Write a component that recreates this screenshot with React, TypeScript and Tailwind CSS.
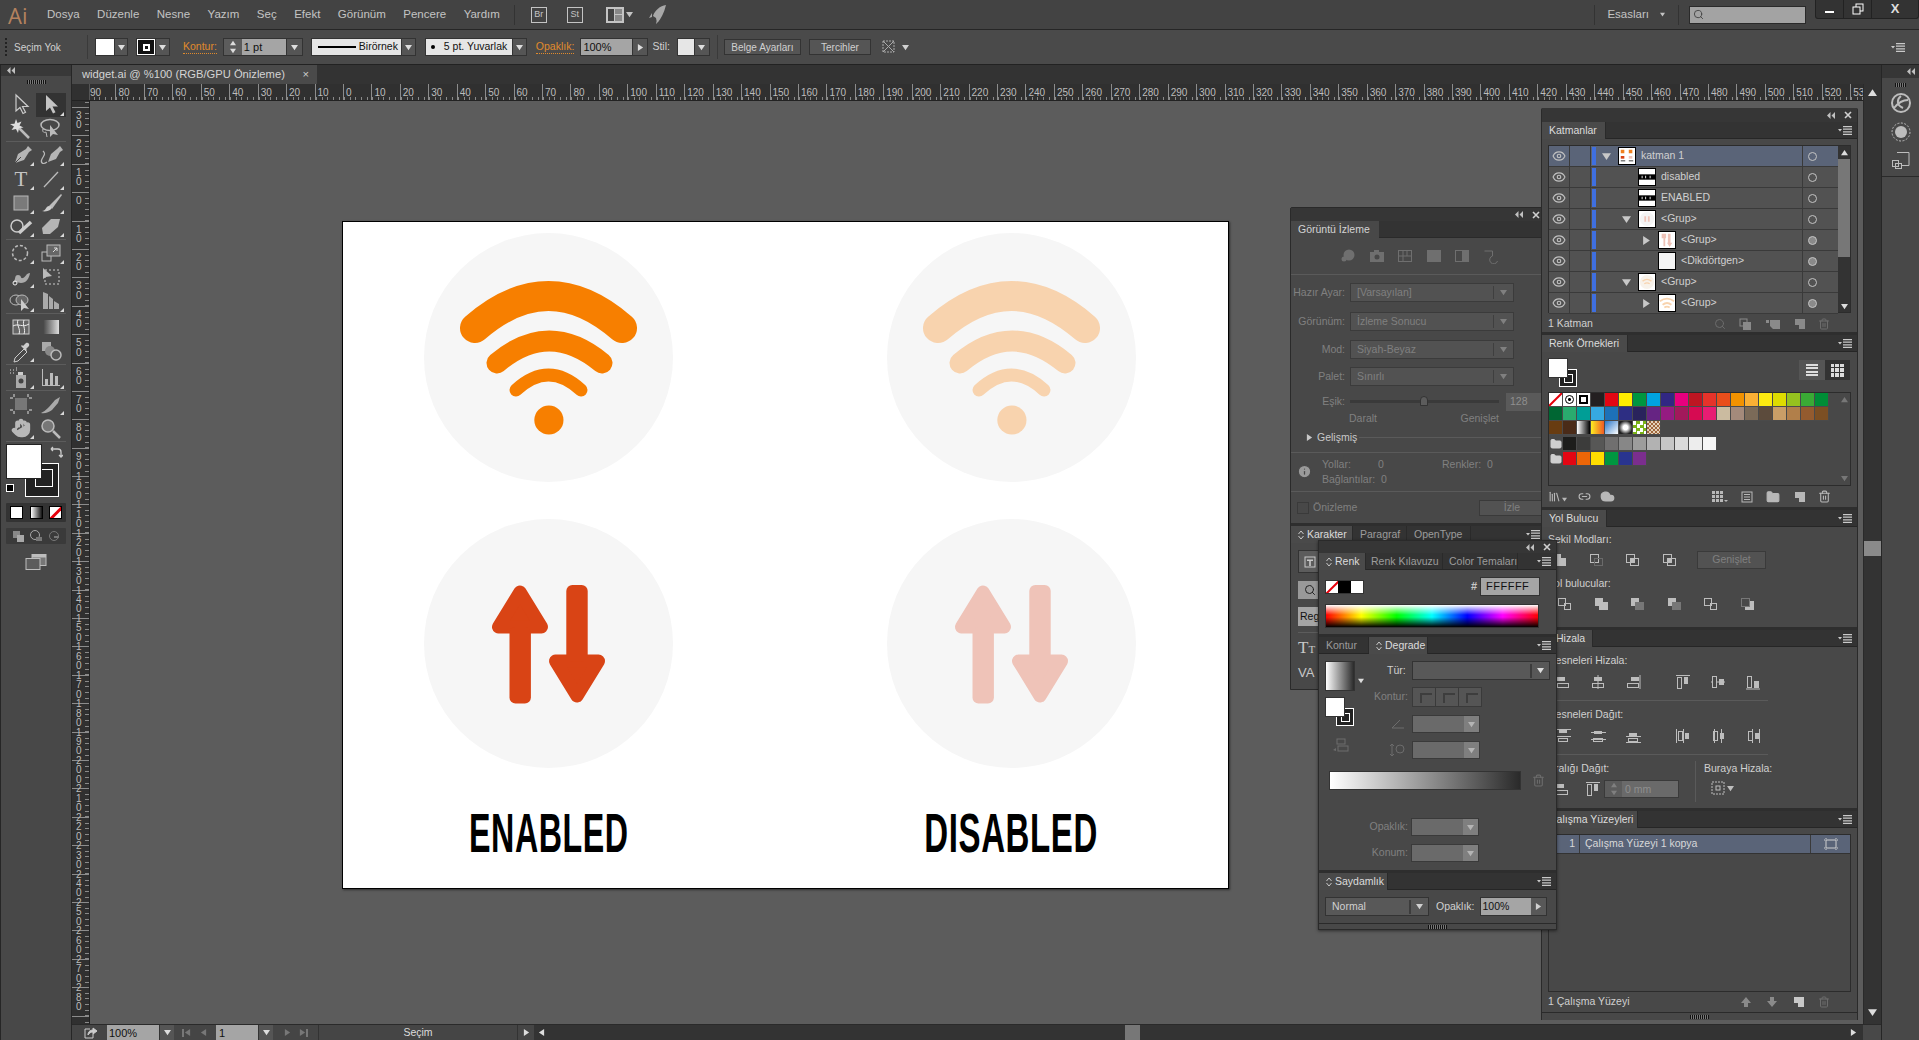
import type { ReactNode } from "react"
import { Eye, Hand, Search, Info, Trash2, Folder, Cloud, Link2, Library } from "lucide-react"

type Kids = { children?: ReactNode; className?: string }

const Tri = ({ dir = "down", size = 7, className = "" }: { dir?: "down" | "up" | "left" | "right"; size?: number; className?: string }) => {
  const d = { down: "M0 1h8L4 7z", up: "M0 7h8L4 1z", left: "M7 0v8L1 4z", right: "M1 0v8l6-4z" }[dir]
  return (
    <svg width={size} height={size} viewBox="0 0 8 8" className={`shrink-0 fill-current ${className}`}>
      <path d={d} />
    </svg>
  )
}

const Sv = ({ w = 16, h = 16, children, className = "" }: Kids & { w?: number; h?: number }) => (
  <svg width={w} height={h} viewBox={`0 0 ${w} ${h}`} className={`shrink-0 ${className}`} fill="currentColor">
    {children}
  </svg>
)

const PanelMenu = () => (
  <svg width="14" height="9" viewBox="0 0 14 9" className="shrink-0 fill-[#c9c9c9]">
    <path d="M0 3h4L2 5.500zM5 0h9v1.200H5zM5 2.600h9v1.200H5zM5 5.200h9v1.200H5zM5 7.800h9V9H5z" />
  </svg>
)

const Updown = () => (
  <svg width="6" height="10" viewBox="0 0 6 10" className="mr-[3px] shrink-0 fill-none stroke-[#c9c9c9]">
    <path d="M.5 4 3 1l2.500 3M.5 6 3 9l2.500-3" />
  </svg>
)

type Tab = { label: string; w: number; on?: boolean; ud?: boolean; pl?: number }

function TabRow({ tabs }: { tabs: Tab[] }) {
  return (
    <div className="flex h-[17px] shrink-0 items-stretch border-b border-[#262626] bg-[#333333]">
      {tabs.map((t) => (
        <div
          key={t.label}
          style={{ width: t.w, paddingLeft: t.pl ?? 7 }}
          className={`flex items-center whitespace-nowrap border-r border-[#2a2a2a] text-[10.500px] leading-none ${
            t.on ? "-mb-px bg-[#4a4a4a] text-[#dcdcdc]" : "text-[#9c9c9c]"
          }`}
        >
          {t.ud && <Updown />}
          {t.label}
        </div>
      ))}
      <div className="ml-auto flex items-center pr-[5px]">
        <PanelMenu />
      </div>
    </div>
  )
}

const Close = () => (
  <svg width="8" height="8" viewBox="0 0 8 8" className="stroke-[#d0d0d0] stroke-[1.6]">
    <path d="M1 1l6 6M7 1 1 7" />
  </svg>
)

const Collapse = () => (
  <svg width="8" height="7" viewBox="0 0 8 7" className="fill-[#c0c0c0]">
    <path d="M3.500 0v7L0 3.500zM8 0v7L4.500 3.500z" />
  </svg>
)

const TitleBar = ({ className = "h-[14px]" }: { className?: string }) => (
  <div className={`flex shrink-0 items-center justify-end gap-[9px] bg-[#363636] pr-[5px] ${className}`}>
    <Collapse />
    <Close />
  </div>
)

// dolgu + kontur kutusu
function FillStroke({ big = false }: { big?: boolean }) {
  if (big) {
    return (
      <div className="relative h-[53px] w-[53px]">
        <div className="absolute left-[19px] top-[19px] flex h-[34px] w-[34px] items-center justify-center border-[1px] border-white bg-[#222]">
          <div className="mt-[-4px] ml-[4px] h-[18px] w-[18px] border border-white" />
        </div>
        <div className="absolute left-0 top-0 h-[35px] w-[36px] border border-[#222] bg-white" />
      </div>
    )
  }
  return (
    <div className="relative h-[29px] w-[29px]">
      <div className="absolute left-[11px] top-[11px] flex h-[18px] w-[18px] items-center justify-center border border-white bg-[#222]">
        <div className="h-[9px] w-[9px] border border-white" />
      </div>
      <div className="absolute left-0 top-0 h-[20px] w-[20px] border border-[#333] bg-white" />
    </div>
  )
}

/* ---------- araçlar ---------- */
const flagMark = <path d="M27 23h-4l4-4z" fill="#d8d8d8" />

const toolIcons: { key: string; flag?: boolean; on?: boolean; d: ReactNode }[] = [
  { key: "sel", d: <path d="M9 2v16l4-3.500 3 6 2.500-1.200-3-5.800h5.500z" fill="none" stroke="#ccc" strokeWidth="1.200" /> },
  { key: "dir", on: true, flag: true, d: <path d="M9 2v16l4-3.500 3 6 2.500-1.200-3-5.800h5.500z" fill="#c4c4c4" /> },
  { key: "wand", d: <><path d="M12 11l10 10" stroke="#bbb" strokeWidth="2.500" /><path d="M9 2l1.500 4 4-1.500-2 4 4 2-4.500.8L11 16l-2-4-4.500 1 2.500-3.500L3 7l4.500-.2z" fill="#ddd" /></> },
  { key: "lasso", d: <><ellipse cx="13" cy="8" rx="9" ry="5.500" fill="none" stroke="#bbb" strokeWidth="1.500" /><path d="M6 12c-1 3 1 4 3 3l1 5" fill="none" stroke="#bbb" /><path d="M13 8v12l3-3 5 1z" fill="#bbb" /></> },
  { key: "pen", flag: true, d: <><path d="M21 3l4 4-3 2-5 8-9 3 3-9 8-5z" fill="#b5b5b5" /><path d="M8 20l6-6" stroke="#444" /></> },
  { key: "curv", flag: true, d: <><path d="M23 3l3 4-3 2-4 7-8 3 3-8 6-5z" fill="#b5b5b5" /><path d="M10 19c-4 3-7 1-5-3s4-5 1-8" fill="none" stroke="#bbb" strokeWidth="1.200" /></> },
  { key: "type", flag: true, d: <text x="14" y="19" textAnchor="middle" fontSize="21" fontFamily="Liberation Serif, serif" fill="#c4c4c4">T</text> },
  { key: "line", flag: true, d: <path d="M7 20 21 5" stroke="#bbb" strokeWidth="1.300" /> },
  { key: "rect", flag: true, d: <rect x="7" y="5" width="14" height="14" fill="#7a7a7a" stroke="#b8b8b8" /> },
  { key: "brush", flag: true, d: <><path d="M12 15 24 3l1 1-10 14z" fill="#bbb" /><path d="M5 20c4 0 4-5 7-5s3 3 1 4-5 2-8 1z" fill="#ccc" /></> },
  { key: "shaper", flag: true, d: <><circle cx="10" cy="12" r="6" fill="none" stroke="#ccc" strokeWidth="1.500" /><path d="M12 19 24 8" stroke="#ccc" strokeWidth="3.500" /></> },
  { key: "eraser", flag: true, d: <path d="M5 14l9-9h9l-2 8-8 7H6z" fill="#b5b5b5" /> },
  { key: "rot", flag: true, d: <circle cx="13" cy="12" r="7.500" fill="none" stroke="#bbb" strokeWidth="1.500" strokeDasharray="3 2" /> },
  { key: "scale", flag: true, d: <><rect x="5" y="11" width="9" height="9" fill="none" stroke="#bbb" /><rect x="10" y="4" width="13" height="11" fill="#666" stroke="#bbb" /><path d="M16 11l4-4m-3 0h3v3" fill="none" stroke="#ddd" /></> },
  { key: "warp", flag: true, d: <><path d="M6 18c3-3 1-8 5-8s2 4 5 3 3-5 7-5c-1 6-4 10-9 10-3 0-5-2-8 0z" fill="#aaa" /><circle cx="8" cy="18" r="2" fill="none" stroke="#eee" /></> },
  { key: "free", d: <><rect x="8" y="5" width="14" height="14" fill="none" stroke="#ccc" strokeDasharray="2 2" /><path d="M6 3v11l3-2 6-1z" fill="#bbb" /></> },
  { key: "build", flag: true, d: <><ellipse cx="9" cy="11" rx="6" ry="5" fill="none" stroke="#bbb" /><ellipse cx="15" cy="11" rx="6" ry="5" fill="#666" stroke="#bbb" /><path d="M14 10v12l3-3 5 1z" fill="#ccc" /></> },
  { key: "persp", flag: true, d: <path d="M6 3l5 2v15H6zM12 7l4 3v10h-4zM17 12l5 3v5h-5z" fill="#aaa" /> },
  { key: "mesh", d: <><rect x="6" y="5" width="16" height="14" fill="#666" stroke="#ccc" /><path d="M6 11c5-3 10 2 16-2M11 5c-2 5 3 9 1 14M17 5c-2 5 2 9 0 14" fill="none" stroke="#eee" /></> },
  { key: "grad", d: <><defs><linearGradient id="tg"><stop offset="0" stopColor="#444" /><stop offset="1" stopColor="#ddd" /></linearGradient></defs><rect x="6" y="5" width="16" height="14" fill="url(#tg)" /></> },
  { key: "drop", flag: true, d: <><path d="M8 19l9-9 3 3-9 9-4 1z" fill="none" stroke="#ccc" /><path d="M16 7l3-3c2-1 4 1 3 3l-3 3 1 1-1 1-5-5 1-1z" fill="#ccc" /></> },
  { key: "blend", d: <><rect x="5" y="3" width="9" height="9" fill="#aaa" /><circle cx="13" cy="12" r="5" fill="#888" /><circle cx="19" cy="16" r="5" fill="#555" stroke="#bbb" strokeWidth="1.500" /></> },
  { key: "spray", flag: true, d: <><rect x="9" y="9" width="10" height="13" fill="#aaa" /><circle cx="14" cy="15" r="2.500" fill="#444" /><rect x="11" y="6" width="5" height="3" fill="#ccc" /><path d="M3 4h1M6 4h1M9 4h1M3 7h1M6 7h1M9 2h1" stroke="#ddd" /></> },
  { key: "graph", flag: true, d: <path d="M5 3v17h18v-1H6V3zM8 13h3v6H8zM13 7h3v12h-3zM18 10h3v9h-3z" fill="#bbb" /> },
  { key: "board", d: <><rect x="8" y="6" width="12" height="12" fill="#777" /><path d="M7 2v3M7 19v3M21 2v3M21 19v3M3 6h3M22 6h3M3 18h3M22 18h3" stroke="#ddd" /></> },
  { key: "slice", flag: true, d: <path d="M4 21c5-2 9-7 14-13l5-3-2 6-6 7c-3 2-7 4-11 3z" fill="#aaa" /> },
  { key: "hand", flag: true, d: <g transform="translate(4 2)"><Hand size={20} fill="#b8b8b8" stroke="#b8b8b8" /></g> },
  { key: "zoom", d: <><circle cx="11" cy="10" r="6" fill="#777" stroke="#bbb" strokeWidth="1.500" /><path d="M16 15l7 7" stroke="#bbb" strokeWidth="2.500" /></> },
]

const toolSeps = [false, true, false, false, false, true, false, false, true, false, true, true, false, true]

function ToolPanel() {
  return (
    <div className="flex w-[72px] shrink-0 flex-col border-x border-[#262626] bg-[#484848]">
      <div className="flex h-[11px] items-center bg-[#383838] pl-[6px]">
        <Collapse />
      </div>
      <div className="mx-auto mt-[4px] h-[4px] w-[19px] bg-[repeating-linear-gradient(90deg,#111_0,#111_1px,#777_1px,#777_2px)]" />
      <div className="mt-[9px]">
        {toolSeps.map((sep, i) => (
          <div key={i}>
            <div className="grid h-[23.700px] grid-cols-[30px_30px] pl-[5px]">
              {toolIcons.slice(i * 2, i * 2 + 2).map((t) => (
                <div key={t.key} className={`flex items-center justify-center ${t.on ? "bg-[#333]" : ""}`}>
                  <svg width="28" height="24" viewBox="0 0 28 24">
                    {t.d}
                    {t.flag && flagMark}
                  </svg>
                </div>
              ))}
            </div>
            {sep && <div className="mx-[5px] my-[1px] h-px bg-[#5c5c5c]" />}
          </div>
        ))}
      </div>
      <div className="relative mt-[1px] ml-[5px] h-[53px] w-[60px]">
        <FillStroke big />
        <svg width="13" height="13" viewBox="0 0 13 13" className="absolute left-[44px] top-[1px] fill-none stroke-[#ccc] stroke-[1.300]">
          <path d="M1 4h7c2 0 3 1 3 3v5M1 4l2-2M1 4l2 2M9 10l2 2 2-2" />
        </svg>
        <div className="absolute left-0 top-[40px] h-[8px] w-[8px] border border-white bg-black" />
      </div>
      <div className="mx-[5px] mt-[6px] flex h-[19px] items-center justify-between rounded-[1px] bg-[#333] px-[4px]">
        <div className="h-[13px] w-[13px] border border-black bg-white" />
        <div className="h-[13px] w-[13px] border border-black bg-[linear-gradient(90deg,#fff,#111)]" />
        <div className="relative h-[13px] w-[13px] overflow-hidden border border-black bg-white">
          <div className="absolute left-[-3px] top-[4px] h-[3px] w-[20px] -rotate-45 bg-red-600" />
        </div>
      </div>
      <div className="mx-[5px] mt-[6px] flex h-[16px] items-center justify-between rounded-[1px] bg-[#3a3a3a] px-[6px] text-[#a8a8a8]">
        <Sv w={12} h={12}><rect x="1" y="1" width="7" height="7" fill="#888" /><rect x="5" y="5" width="7" height="7" /></Sv>
        <Sv w={12} h={12}><circle cx="5" cy="5" r="4.500" fill="none" stroke="currentColor" /><rect x="6" y="7" width="6" height="4" fill="#777" /></Sv>
        <Sv w={12} h={12} className="text-[#777]"><circle cx="6" cy="6" r="4.500" fill="none" stroke="currentColor" /><rect x="6" y="6" width="5" height="2" /></Sv>
      </div>
      <div className="mx-auto mt-[10px] text-[#bdbdbd]">
        <Sv w={22} h={16}>
          <rect x="7" y="0.500" width="14" height="11" fill="#777" stroke="currentColor" />
          <rect x="7" y="0.500" width="14" height="3" />
          <rect x="1" y="4.500" width="14" height="11" fill="#5c5c5c" stroke="currentColor" />
        </Sv>
      </div>
    </div>
  )
}

/* ---------- üst şeritler ---------- */
const menus = ["Dosya", "Düzenle", "Nesne", "Yazım", "Seç", "Efekt", "Görünüm", "Pencere", "Yardım"]

function MenuBar() {
  return (
    <div className="flex h-[30px] shrink-0 items-center border-b border-[#262626] bg-[#434343] text-[#c4c4c4]">
      <span className="ml-[8px] w-[39px] text-[22px] leading-[28px] text-[#b4825f] font-['Open_Sans',sans-serif]">Ai</span>
      <div className="flex gap-[17.500px] text-[11.500px]">
        {menus.map((m) => (
          <span key={m}>{m}</span>
        ))}
      </div>
      <div className="ml-[14px] h-[20px] w-px bg-[#333]" />
      <div className="ml-[16px] flex h-[16px] w-[16px] items-center justify-center border border-[#c4c4c4] text-[9px]">Br</div>
      <div className="ml-[20px] flex h-[16px] w-[16px] items-center justify-center border border-[#c4c4c4] text-[9px]">St</div>
      <div className="ml-[23px] flex h-[16px] w-[18px] gap-px border border-[#c4c4c4] bg-[#c4c4c4] p-px">
        <div className="h-full w-[6px] bg-[#434343]" />
        <div className="flex flex-1 flex-col gap-px"><div className="flex-1 bg-[#888]" /><div className="flex-1 bg-[#888]" /></div>
      </div>
      <Tri className="ml-[2px]" />
      <svg width="18" height="22" viewBox="0 0 18 22" className="ml-[16px] fill-[#a8a8a8]">
        <path d="M17 1C11 2 6 6 4 12l3 2 1 5c4-4 7-10 9-18zM3 9 0 14l3-1zM8 15l-1 5 3-3z" />
      </svg>
      <div className="ml-auto h-[20px] w-px bg-[#333]" />
      <span className="ml-[12px] text-[11.500px]">Esasları</span>
      <Tri size={5} className="ml-[11px]" />
      <div className="ml-[13px] h-[20px] w-px bg-[#333]" />
      <div className="ml-[10px] flex h-[18px] w-[117px] items-center border border-[#2a2a2a] bg-[#a3a3a3] pl-[3px] text-[#444]">
        <Search size={11} />
      </div>
      <div className="mb-[11px] ml-[9px] flex h-[19px] w-[104px] items-center rounded-b-[3px] border border-t-0 border-[#222] bg-[#333] text-[#ddd]">
        <div className="flex h-full w-[28px] items-center justify-center border-r border-[#222]"><div className="mt-[6px] h-[2px] w-[9px] bg-white" /></div>
        <div className="flex h-full w-[28px] items-center justify-center border-r border-[#222]">
          <Sv w={12} h={12}><rect x="4" y="1" width="7" height="7" fill="none" stroke="#fff" /><rect x="1" y="4" width="7" height="7" fill="#333" stroke="#fff" /></Sv>
        </div>
        <div className="flex-1 text-center text-[13px] font-bold leading-none">X</div>
      </div>
    </div>
  )
}

const Drop = ({ className = "" }: { className?: string }) => (
  <div className={`flex items-center justify-center border-l border-[#333] bg-[#555] text-[#ddd] ${className}`}>
    <Tri />
  </div>
)

function ControlBar() {
  return (
    <div className="flex h-[35px] shrink-0 items-center border-b border-[#222] bg-[#4a4a4a] text-[11px] text-[#d0d0d0]">
      <div className="ml-[5px] h-[18px] w-[2px] border-l-2 border-dotted border-[#222]" />
      <span className="ml-[7px] w-[60px] text-[10px]">Seçim Yok</span>
      <div className="ml-[13px] h-[24px] w-px bg-[#3a3a3a]" />
      <div className="ml-[7px] flex h-[18px] w-[33px] border border-[#333]">
        <div className="w-[18px] bg-white" />
        <Drop className="flex-1" />
      </div>
      <div className="ml-[8px] flex h-[18px] w-[34px] border border-[#333]">
        <div className="flex w-[18px] items-center justify-center border border-white bg-[#111]">
          <div className="h-[7px] w-[7px] border-2 border-white" />
        </div>
        <Drop className="flex-1" />
      </div>
      <span className="ml-[13px] border-b border-dotted border-[#e08a2c] text-[10.500px] leading-[13px] text-[#e08a2c]">Kontur:</span>
      <div className="ml-[6px] flex h-[18px] w-[80px] border border-[#333]">
        <div className="flex w-[18px] flex-col items-center justify-around bg-[#5c5c5c] text-[#ddd]"><Tri dir="up" size={6} /><Tri size={6} /></div>
        <div className="flex-1 bg-[#a5a5a5] pl-[2px] text-[#111]">1 pt</div>
        <Drop className="w-[16px]" />
      </div>
      <div className="ml-[8px] flex h-[18px] w-[105px] border border-[#333]">
        <div className="flex flex-1 items-center gap-[3px] bg-[#e6e6e6] pl-[6px] text-[10.500px] text-[#111]">
          <div className="h-[2px] w-[38px] bg-black" />
          Birörnek
        </div>
        <Drop className="w-[14px]" />
      </div>
      <div className="ml-[9px] flex h-[18px] w-[102px] border border-[#333]">
        <div className="flex flex-1 items-center gap-[9px] bg-[#e6e6e6] pl-[5px] text-[10.500px] text-[#111]">
          <div className="h-[4px] w-[4px] rounded-full bg-black" />
          5 pt. Yuvarlak
        </div>
        <Drop className="w-[14px]" />
      </div>
      <span className="ml-[9px] border-b border-dotted border-[#e08a2c] text-[10.500px] leading-[13px] text-[#e08a2c]">Opaklık:</span>
      <div className="ml-[6px] flex h-[18px] w-[68px] border border-[#333]">
        <div className="flex-1 bg-[#a5a5a5] pl-[2px] text-[#111]">100%</div>
        <Drop className="w-[15px] [&>svg]:-rotate-90" />
      </div>
      <span className="ml-[4px] text-[10.500px]">Stil:</span>
      <div className="ml-[7px] flex h-[18px] w-[33px] border border-[#333]">
        <div className="w-[16px] bg-[#e6e6e6]" />
        <Drop className="flex-1" />
      </div>
      <div className="ml-[7px] h-[24px] w-px bg-[#3a3a3a]" />
      <div className="ml-[6px] flex h-[16px] w-[77px] items-center justify-center border border-[#333] bg-[#555] text-[10px]">Belge Ayarları</div>
      <div className="ml-[8px] flex h-[16px] w-[62px] items-center justify-center border border-[#333] bg-[#555] text-[10px]">Tercihler</div>
      <svg width="16" height="16" viewBox="0 0 16 16" className="ml-[10px] fill-none stroke-[#aaa]">
        <rect x="2" y="2" width="11" height="11" strokeDasharray="2 1" />
        <path d="M2 2l11 11M13 2 2 13" />
      </svg>
      <Tri className="ml-[5px]" />
      <div className="ml-auto pr-[14px]"><PanelMenu /></div>
    </div>
  )
}

/* ---------- cetveller ---------- */
const hCells = Array.from({ length: 63 }, (_, i) => Math.abs(-90 + i * 10))
const vCells = Array.from({ length: 34 }, (_, i) => Math.abs(-40 + i * 10))

function HRuler() {
  return (
    <div className="flex h-[17px] shrink-0 border-b border-[#222] bg-[#303030]">
      <div className="h-full w-[18px] shrink-0 border-r border-[#555] bg-[#303030]" />
      <div className="flex flex-1 overflow-hidden">
        <div className="-ml-[3px] flex">
          {hCells.map((v, i) => (
            <div key={i} className="flex h-full w-[28.450px] shrink-0 flex-col border-l border-[#8c8c8c]">
              <div className="h-[13px] pl-[2px] text-[10px] leading-[17px] text-[#bdbdbd]">{v}</div>
              <div className="h-[3px] bg-[repeating-linear-gradient(90deg,#8a8a8a_0,#8a8a8a_1px,transparent_1px,transparent_5.690px)]" />
            </div>
          ))}
        </div>
      </div>
    </div>
  )
}

function VRuler() {
  return (
    <div className="w-[18px] shrink-0 overflow-hidden border-r border-[#222] bg-[#303030]">
      <div className="-mt-[22.400px]">
        {vCells.map((v, i) => (
          <div key={i} className="relative flex h-[28.400px] border-t border-[#8c8c8c]">
            <div className={`flex-1 pl-[4px] text-[10px] leading-[9.400px] text-[#bdbdbd] ${v >= 100 ? "-mt-[5px]" : "mt-[3px]"}`}>
              {/* ilk ve son hücre cetvelin kenarında kalıyor, etiket yok */}
              {i > 0 && i < vCells.length - 1 && String(v).split("").map((c, k) => (
                <div key={k}>{c}</div>
              ))}
            </div>
            <div className="w-[4px] bg-[repeating-linear-gradient(180deg,transparent_0,transparent_4.680px,#8a8a8a_4.680px,#8a8a8a_5.680px)]" />
          </div>
        ))}
      </div>
    </div>
  )
}

/* ---------- çizim yüzeyi ---------- */
function Wifi({ color }: { color: string }) {
  return (
    <div className="h-[249px] w-[249px] rounded-full bg-[#f6f6f6]">
      <svg width="249" height="249" viewBox="0 0 249 249" fill="none" stroke={color} strokeLinecap="round">
        <path d="M51 95Q124.500 31 198 95" strokeWidth="30" />
        <path d="M73 130Q125 86 178 130" strokeWidth="21" />
        <path d="M92 157Q124.500 127 157 157" strokeWidth="13" />
        <circle cx="124.900" cy="187" r="14.600" fill={color} stroke="none" />
      </svg>
    </div>
  )
}

function Arrows({ color }: { color: string }) {
  return (
    <div className="h-[249px] w-[249px] rounded-full bg-[#f6f6f6]">
      <svg width="249" height="249" viewBox="0 0 249 249" fill={color} stroke={color} strokeLinejoin="round">
        <path d="M96 73 74.500 108h43z" strokeWidth="13" />
        <rect x="85.500" y="108" width="21.400" height="76.500" rx="6" stroke="none" />
        <path d="M153 177l-21.500-35h43z" strokeWidth="13" />
        <rect x="142.300" y="66" width="21.400" height="76.500" rx="6" stroke="none" />
      </svg>
    </div>
  )
}

function Artboard() {
  const label = "mt-[8px] whitespace-nowrap text-center font-['Liberation_Sans',sans-serif] text-[56px] font-bold leading-[40px] tracking-[1px] text-black"
  return (
    <div className="flex h-[668px] w-[887px] gap-[213.500px] border border-black bg-white pl-[81px] pt-[11px] shadow-[1px_1px_2px_rgba(0,0,0,0.5)]">
      <div className="flex w-[249px] flex-col items-center gap-[37px]">
        <Wifi color="#f77f00" />
        <Arrows color="#d94415" />
        <div className={`${label} scale-x-[0.575]`}>ENABLED</div>
      </div>
      <div className="flex w-[249px] flex-col items-center gap-[37px]">
        <Wifi color="#f8d3ae" />
        <Arrows color="#efc3b8" />
        <div className={`${label} scale-x-[0.59]`}>DISABLED</div>
      </div>
    </div>
  )
}

/* ---------- Görüntü İzleme paneli ---------- */
const Sel = ({ label, top = 0, children }: { label: string; top?: number; children?: ReactNode }) => (
  <div className="flex items-center" style={{ marginTop: top }}>
    <span className="w-[54px] text-right text-[10.500px] text-[#808080]">{label}</span>
    <div className="ml-[5px] flex h-[19px] w-[164px] items-center border border-[#3b3b3b] bg-[#525252] pl-[6px] text-[10.500px] text-[#808080]">
      {children}
      <div className="ml-auto h-[13px] w-px bg-[#3f3f3f]" />
      <Tri className="mx-[6px] text-[#808080]" />
    </div>
  </div>
)

function TracePanel() {
  return (
    <div className="absolute left-[1290px] top-[207px] z-10 flex h-[483px] w-[256px] flex-col gap-[3px] rounded-t-[2px] border border-[#2a2a2a] bg-[#2e2e2e]">
      <div className="flex h-[315px] flex-col bg-[#484848]">
        <div className="flex h-[13px] items-center justify-end gap-[9px] bg-[#363636] pr-[5px]">
          <Collapse />
          <Close />
        </div>
        <div className="flex h-[17px] border-b border-[#2a2a2a] bg-[#333]">
          <div className="-mb-px flex w-[88px] items-center bg-[#484848] pl-[7px] text-[10.500px] text-[#d4d4d4]">Görüntü İzleme</div>
        </div>
        <div className="flex h-[37px] items-center gap-[12.500px] border-b border-[#5a5a5a] pl-[49px] text-[#6f6f6f]">
          <Sv><circle cx="9" cy="7" r="5.500" /><circle cx="4" cy="11" r="2.500" /></Sv>
          <Sv><rect x="1" y="4" width="14" height="10" /><rect x="5" y="2" width="5" height="2" /><circle cx="8" cy="9" r="2.500" fill="#484848" /></Sv>
          <Sv><rect x="1.500" y="2.500" width="13" height="11" fill="none" stroke="currentColor" /><path d="M1 8h14M6 3v11M10 3v5" stroke="currentColor" /></Sv>
          <Sv><rect x="1" y="2" width="14" height="12" /></Sv>
          <Sv><rect x="1.500" y="2.500" width="13" height="11" fill="none" stroke="currentColor" /><rect x="8" y="3" width="6" height="10" /></Sv>
          <Sv><path d="M1.500 3h8v5a4 4 0 1 0 5 5" fill="none" stroke="currentColor" /></Sv>
        </div>
        <div className="pt-[8px]">
          <Sel label="Hazır Ayar:"><span>[Varsayılan]</span></Sel>
          <Sel label="Görünüm:" top={10}><span>İzleme Sonucu</span></Sel>
          <Sel label="Mod:" top={9}><span>Siyah-Beyaz</span></Sel>
          <Sel label="Palet:" top={8}><span>Sınırlı</span></Sel>
        </div>
        <div className="mt-[6px] flex h-[19px] items-center">
          <span className="w-[54px] text-right text-[10.500px] text-[#808080]">Eşik:</span>
          <div className="relative ml-[5px] h-[3px] w-[149px] bg-[#3a3a3a]">
            <div className="absolute left-[70px] top-[-4px] h-[10px] w-[8px] rounded-t-full border border-[#333] bg-[#5c5c5c]" />
          </div>
          <div className="ml-[7px] flex h-[18px] flex-1 items-center bg-[#5a5a5a] pl-[4px] text-[10.500px] text-[#8f8f8f]">128</div>
        </div>
        <div className="flex w-[208px] justify-between pl-[58px] text-[10.500px] leading-[14px] text-[#808080]">
          <span>Daralt</span>
          <span>Genişlet</span>
        </div>
        <div className="mt-[6px] flex h-[13px] items-center pl-[15px] text-[10.500px] text-[#c8c8c8]">
          <Tri dir="right" />
          <span className="ml-[4px]">Gelişmiş</span>
          <div className="ml-[2px] h-px flex-1 bg-[#5a5a5a]" />
        </div>
        <div className="mt-[8px] flex h-[40px] border-y border-[#5a5a5a] pl-[6px] text-[10.500px] text-[#808080]">
          <Info size={15} className="mr-[10px] mt-[11px] fill-[#9a9a9a] text-[#484848]" />
          <div className="grid flex-1 grid-cols-[56px_64px_1fr] content-center gap-y-[2px] leading-[13px]">
            <span>Yollar:</span><span>0</span><span>Renkler:&nbsp; 0</span>
            <span className="col-span-3">Bağlantılar:&nbsp; 0</span>
          </div>
        </div>
        <div className="flex flex-1 items-center pl-[6px] text-[10.500px] text-[#808080]">
          <div className="h-[12px] w-[12px] border border-[#3a3a3a]" />
          <span className="ml-[4px]">Önizleme</span>
          <div className="ml-auto flex h-[16px] w-[66px] items-center justify-center border border-[#3a3a3a] bg-[#525252]">İzle</div>
        </div>
      </div>
      <div className="flex flex-1 flex-col bg-[#484848]">
        <TabRow tabs={[{ label: "Karakter", w: 62, on: true, ud: true }, { label: "Paragraf", w: 54 }, { label: "OpenType", w: 64 }]} />
        <div className="flex flex-col items-start pl-[7px] pt-[7px] text-[#c8c8c8]">
          <div className="flex h-[23px] w-[24px] items-center justify-center border border-[#333] bg-[#5c5c5c]">
            <Sv w={14} h={14}><rect x="2" y="2" width="10" height="10" fill="none" stroke="currentColor" /><path d="M4 4.500h6v1.500H7.800v5H6.200V6H4z" /></Sv>
          </div>
          <div className="mt-[8px] flex h-[18px] w-[24px] items-center justify-center bg-[#999] text-[#222]"><Search size={12} /></div>
          <div className="mt-[8px] h-[19px] w-[24px] bg-[#a5a5a5] pl-[2px] text-[10.500px] leading-[18px] text-[#111]">Reg</div>
          <div className="mt-[6px] h-px w-[20px] bg-[#5c5c5c]" />
          <div className="mt-[6px] text-[17px] leading-[18px] font-['Liberation_Serif',serif]">T<span className="text-[11px]">T</span></div>
          <div className="mt-[7px] text-[13px] leading-[16px]">VA</div>
        </div>
      </div>
    </div>
  )
}

/* ---------- Renk + Degrade + Saydamlık ---------- */
const NumField = ({ className = "" }: { className?: string }) => (
  <div className={`flex h-[18px] w-[68px] border border-[#3a3a3a] bg-[#6a6a6a] ${className}`}>
    <div className="flex-1" />
    <div className="flex w-[15px] items-center justify-center bg-[#7f7f7f] text-[#b4b4b4]"><Tri /></div>
  </div>
)

function ColorPanel() {
  return (
    <div className="absolute left-[1318px] top-[540px] z-30 flex h-[390px] w-[239px] flex-col border border-[#2a2a2a] bg-[#2e2e2e] shadow-[0_1px_3px_rgba(0,0,0,0.5)]">
      <TitleBar className="h-[12px]" />
      <TabRow tabs={[{ label: "Renk", w: 47, on: true, ud: true }, { label: "Renk Kılavuzu", w: 77, pl: 5 }, { label: "Color Temaları", w: 75, pl: 6 }]} />
      <div className="h-[64px] bg-[#484848] px-[6px] pt-[7px]">
        <div className="flex items-center">
          <div className="flex h-[14px] w-[39px] border border-[#333]">
            <div className="relative flex-1 overflow-hidden bg-white"><div className="absolute left-[-3px] top-[5px] h-[2px] w-[20px] -rotate-45 bg-red-600" /></div>
            <div className="flex-1 bg-black" />
            <div className="flex-1 bg-white" />
          </div>
          <span className="ml-auto text-[11px] font-bold text-[#c8c8c8]">#</span>
          <div className="ml-[3px] mr-[10px] flex h-[19px] w-[60px] items-center border border-[#333] bg-[#a5a5a5] pl-[5px] text-[11px] tracking-[0.5px] text-[#111]">FFFFFF</div>
        </div>
        <div className="mt-[8px] h-[24px] w-[214px] border border-[#333] bg-[linear-gradient(to_bottom,#ffffff_0%,transparent_45%,transparent_55%,#000000_100%),linear-gradient(to_right,#ff0000,#ffff00,#00ff00,#00ffff,#0000ff,#ff00ff,#ff0000)]" />
      </div>
      <div className="h-[3px] shrink-0" />
      <TabRow tabs={[{ label: "Kontur", w: 50 }, { label: "Degrade", w: 59, on: true, ud: true }]} />
      <div className="relative h-[216px] bg-[#484848] px-[6px] pt-[7px] text-[10.500px] text-[#808080]">
        <div className="flex">
          <div className="flex w-[87px] flex-col">
            <div className="flex items-center">
              <div className="h-[30px] w-[30px] border border-[#333] bg-[linear-gradient(90deg,#fff,#2a2a2a)]" />
              <Tri size={6} className="ml-[3px] mt-[10px] text-[#ddd]" />
            </div>
            <div className="mt-[6px]"><FillStroke /></div>
            <div className="ml-[8px] mt-[12px] text-[#6c6c6c]">
              <Sv w={16} h={14}><rect x="4" y="1" width="8" height="5" fill="none" stroke="currentColor" /><rect x="5" y="8" width="10" height="5" fill="none" stroke="currentColor" /><path d="M0 12l3-2v3z" /></Sv>
            </div>
          </div>
          <div className="flex flex-col items-stretch">
            <div className="flex items-center">
              <span className="w-[0px] whitespace-nowrap text-[#d0d0d0]"><span className="relative right-[20px] top-0">Tür:</span></span>
              <div className="ml-[5px] flex h-[19px] w-[138px] items-center border border-[#333] bg-[#585858]">
                <div className="ml-auto h-[14px] w-[2px] border-x border-[#3c3c3c]" />
                <Tri className="mx-[5px] text-[#ddd]" />
              </div>
            </div>
            <div className="mt-[7px] flex items-center">
              <span className="w-0 whitespace-nowrap"><span className="relative right-[33px]">Kontur:</span></span>
              <div className="ml-[5px] flex h-[20px] w-[70px] gap-px bg-[#3a3a3a] p-px">
                {[0, 1, 2].map((k) => (
                  <div key={k} className="flex flex-1 items-end justify-end bg-[#555] p-[3px]">
                    <div className="h-[10px] w-[12px] border-l-2 border-t-2 border-[#3d3d3d]" />
                  </div>
                ))}
              </div>
            </div>
            <div className="ml-[5px] mt-[8px] flex items-center">
              <svg width="12" height="10" viewBox="0 0 12 10" className="absolute left-[73px] fill-none stroke-[#6c6c6c]"><path d="M0 9h12M0 9l8-8" /></svg>
              <NumField />
            </div>
            <div className="ml-[5px] mt-[8px] flex items-center">
              <svg width="16" height="14" viewBox="0 0 16 14" className="absolute left-[71px] fill-none stroke-[#6c6c6c]"><circle cx="10" cy="6" r="4" /><path d="M2 1v12M0 3l2-2 2 2M0 11l2 2 2-2" /></svg>
              <NumField />
            </div>
          </div>
        </div>
        <div className="mt-[12px] flex items-center">
          <div className="ml-[4px] h-[19px] w-[192px] border border-[#333] bg-[linear-gradient(90deg,#fff,#2a2a2a)]" />
          <Trash2 size={13} className="ml-[11px] text-[#6c6c6c]" />
        </div>
        <div className="mt-[28px] flex items-center">
          <span className="w-[83px] text-right">Opaklık:</span>
          <NumField className="ml-[3px]" />
        </div>
        <div className="mt-[8px] flex items-center">
          <span className="w-[83px] text-right">Konum:</span>
          <NumField className="ml-[3px]" />
        </div>
      </div>
      <div className="h-[3px] shrink-0" />
      <TabRow tabs={[{ label: "Saydamlık", w: 69, on: true, ud: true }]} />
      <div className="flex h-[33px] items-center bg-[#484848] px-[6px] text-[10.500px] text-[#d0d0d0]">
        <div className="flex h-[19px] w-[104px] items-center border border-[#333] bg-[#585858] pl-[6px]">
          Normal
          <div className="ml-auto h-[14px] w-[2px] border-x border-[#3c3c3c]" />
          <Tri className="mx-[5px]" />
        </div>
        <span className="ml-[7px]">Opaklık:</span>
        <div className="ml-[5px] flex h-[19px] w-[67px] border border-[#333]">
          <div className="flex-1 bg-[#a5a5a5] pl-[2px] leading-[17px] text-[#111]">100%</div>
          <div className="flex w-[15px] items-center justify-center bg-[#585858]"><Tri dir="right" /></div>
        </div>
      </div>
      <Gripper />
    </div>
  )
}

const Gripper = () => (
  <div className="flex h-[8px] flex-1 items-center justify-center border-t border-[#2a2a2a] bg-[#484848]">
    <div className="h-[4px] w-[19px] bg-[repeating-linear-gradient(90deg,#111_0,#111_1px,#777_1px,#777_2px)]" />
  </div>
)

/* ---------- sağdaki paneller ---------- */
type Layer = { name: string; lvl: 0 | 1 | 2; arrow?: "down" | "right"; thumb: "all" | "text" | "arrow" | "arrowBig" | "blank" | "wifi" | "wifiBig"; filled?: boolean }

const layers: Layer[] = [
  { name: "katman 1", lvl: 0, arrow: "down", thumb: "all" },
  { name: "disabled", lvl: 1, thumb: "text" },
  { name: "ENABLED", lvl: 1, thumb: "text" },
  { name: "<Grup>", lvl: 1, arrow: "down", thumb: "arrow" },
  { name: "<Grup>", lvl: 2, arrow: "right", thumb: "arrowBig", filled: true },
  { name: "<Dikdörtgen>", lvl: 2, thumb: "blank", filled: true },
  { name: "<Grup>", lvl: 1, arrow: "down", thumb: "wifi" },
  { name: "<Grup>", lvl: 2, arrow: "right", thumb: "wifiBig", filled: true },
]

function Thumb({ kind }: { kind: Layer["thumb"] }) {
  return (
    <svg width="18" height="18" viewBox="0 0 18 18" className="shrink-0 border border-black">
      <rect width="18" height="18" fill={kind === "blank" ? "#f4f4f4" : "#fff"} />
      {kind === "all" && <path d="M2 2h4v4H2zM11 2h4v4h-4z" fill="#f08020" />}
      {kind === "all" && <path d="M2 9h4v3H2z" fill="#d94415" />}
      {kind === "all" && <path d="M11 9h4v3h-4z" fill="#efc3b8" />}
      {kind === "all" && <path d="M2 14h5v1H2zM11 14h5v1h-5z" />}
      {kind === "text" && <path d="M0 6h18v6H0z" />}
      {kind === "text" && <path d="M3 7.500h1v3H3zM7 7.500h1v3H7zM12 7.500h1v3h-1z" fill="#fff" />}
      {kind === "arrow" && <><circle cx="9" cy="9" r="8" fill="#f4f4f4" /><path d="M6 6h2v6H6zM10 6h2v6h-2z" fill="#efc3b8" /></>}
      {kind === "arrowBig" && <path d="M3 2h5v5H7v9H5V7H3zM10 2h3v10h2l-3 5-3-5h1z" fill="#efc3b8" />}
      {kind === "wifi" && <><circle cx="9" cy="9" r="8" fill="#f8f2ea" /><path d="M4 8q5-4 10 0M6 11q3-2 6 0" fill="none" stroke="#f8d3ae" strokeWidth="1.500" /></>}
      {kind === "wifiBig" && <path d="M1 7q8-6 16 0M4 11q5-4 10 0M6 14q3-2 6 0" fill="none" stroke="#f8d3ae" strokeWidth="2" />}
    </svg>
  )
}

function LayersBody() {
  return (
    <div className="h-[193px] bg-[#484848] px-[6px] pt-[6px]">
      <div className="flex h-[168px] border border-[#2c2c2c]">
        <div className="flex-1">
          {layers.map((l, i) => (
            <div key={i} className={`flex h-[21px] items-stretch border-b border-[#3a3a3a] text-[10.500px] text-[#d0d0d0] ${i === 0 ? "bg-[#5a6478]" : "bg-[#525252]"}`}>
              <div className="flex w-[21px] items-center justify-center border-r border-[#3a3a3a]"><Eye size={14} className="text-[#c0c0c0]" /></div>
              <div className="w-[21px] border-r border-[#3a3a3a]" />
              <div className="my-[1px] ml-[1px] w-[4px] bg-[#3f6fe0]" />
              <div className="flex flex-1 items-center" style={{ paddingLeft: 3 + l.lvl * 20 }}>
                <div className="flex w-[19px] pl-[3px] text-[#c8c8c8]">{l.arrow && <Tri dir={l.arrow} size={9} />}</div>
                <Thumb kind={l.thumb} />
                <span className="ml-[5px]">{l.name}</span>
              </div>
              <div className="flex w-[36px] items-center justify-start border-l border-[#3a3a3a] pl-[5px]">
                <div className={`h-[9px] w-[9px] rounded-full border border-[#c4c4c4] ${l.filled ? "bg-[#8a8a8a]" : ""}`} />
              </div>
            </div>
          ))}
        </div>
        <VBar thumbH="h-[98px]" />
      </div>
      <div className="flex h-[21px] items-center pr-[21px] text-[10.500px] text-[#d0d0d0]">
        <span>1 Katman</span>
        <div className="ml-auto flex items-center gap-[13px] text-[#8a8a8a]">
          <Search size={12} className="text-[#6c6c6c]" />
          <Sv w={12} h={12} className="mr-[2px]"><rect x="1" y="1" width="7" height="7" fill="none" stroke="currentColor" /><rect x="4" y="4" width="8" height="8" /></Sv>
          <Sv w={14} h={12}><path d="M4 2h10v9H7l-3-3zM0 2h3v3H0z" /></Sv>
          <Sv w={12} h={12}><path d="M2 1h10v10H6v-4H2z" /></Sv>
          <Trash2 size={12} className="text-[#6c6c6c]" />
        </div>
      </div>
    </div>
  )
}

const VBar = ({ thumbH }: { thumbH: string }) => (
  <div className="flex w-[12px] flex-col items-center bg-[#333] text-[#ddd]">
    <Tri dir="up" className="my-[3px]" />
    <div className={`${thumbH} w-full bg-[#777]`} />
    <Tri className="mb-[2px] mt-auto" />
  </div>
)

const swatchRows: string[][] = [
  ["none", "reg", "white", "#231f20", "#e30613", "#ffed00", "#009640", "#00a3e0", "#312783", "#e6007e", "#be1622", "#e6332a", "#e94e1b", "#f39200", "#fbb034", "#fcea10", "#dedc00", "#95c11f", "#3aaa35", "#008d36"],
  ["#006633", "#2aab6e", "#009e96", "#36a9e1", "#1d71b8", "#2d2e83", "#29235c", "#662483", "#951b81", "#a2195b", "#d60b52", "#e71d73", "#cbbba0", "#a48a7b", "#7b6a58", "#5c4b3c", "#c99e67", "#b17f4a", "#945b2f", "#7c4f23"],
  ["#683c11", "#4a2b18", "g1", "g2", "g3", "g4", "p1", "p2"],
  ["folder", "#1d1d1b", "#3c3c3b", "#575756", "#706f6f", "#878787", "#9d9d9c", "#b2b2b2", "#c6c6c6", "#dadada", "#ededed", "#f6f6f6"],
  ["folder", "#e30613", "#ec6608", "#ffdd00", "#009640", "#29348f", "#7b2e8e"],
]

function Swatch({ c }: { c: string }) {
  const base = "h-[14px] w-[14px] shrink-0 border-r border-b border-[#4a4a4a]"
  if (c === "none") return <div className={`${base} relative overflow-hidden bg-white`}><div className="absolute left-[-3px] top-[5px] h-[2px] w-[20px] -rotate-45 bg-red-600" /></div>
  if (c === "reg") return <div className={`${base} flex items-center justify-center bg-white`}><div className="h-[9px] w-[9px] rounded-full border border-black bg-[radial-gradient(#000_1px,#fff_2px)]" /></div>
  if (c === "white") return <div className={`${base} bg-white p-[2px]`}><div className="h-full w-full border-2 border-black" /></div>
  if (c === "g1") return <div className={`${base} bg-[linear-gradient(90deg,#fff,#000)]`} />
  if (c === "g2") return <div className={`${base} bg-[linear-gradient(90deg,#fdee21,#ef5a24)]`} />
  if (c === "g3") return <div className={`${base} bg-[linear-gradient(135deg,#2a76c8,#fff)]`} />
  if (c === "g4") return <div className={`${base} bg-[radial-gradient(circle,#fff_25%,#222_75%)]`} />
  if (c === "p1") return <div className={`${base} bg-[repeating-conic-gradient(#7ab317_0_25%,#fff_0_50%)] bg-[length:7px_7px]`} />
  if (c === "p2") return <div className={`${base} bg-[repeating-conic-gradient(#a0673c_0_25%,#e3d2b9_0_50%)] bg-[length:4px_4px]`} />
  if (c === "folder") return <div className={`${base} flex items-center justify-center bg-[#484848]`}><Folder size={12} fill="#cfcfcf" className="text-[#cfcfcf]" /></div>
  return <div className={base} style={{ backgroundColor: c }} />
}

function SwatchesBody() {
  return (
    <div className="h-[155px] bg-[#484848] px-[6px] pt-[6px]">
      <div className="flex h-[29px] items-start justify-between">
        <FillStroke />
        <div className="mr-[1px] mt-[2px] flex h-[20px] w-[51px] bg-[#333] text-[#ddd]">
          <div className="flex flex-1 items-center justify-center bg-[#555]">
            <div className="flex h-[13px] w-[12px] flex-col justify-between">
              <div className="h-[2px] bg-current" /><div className="h-[2px] bg-current" /><div className="h-[2px] bg-current" /><div className="h-[2px] bg-current" />
            </div>
          </div>
          <div className="flex flex-1 items-center justify-center">
            <div className="grid h-[13px] w-[13px] grid-cols-3 gap-px">
              {Array.from({ length: 9 }, (_, i) => <div key={i} className="bg-current" />)}
            </div>
          </div>
        </div>
      </div>
      <div className="mt-[5px] flex h-[94px] border border-[#2c2c2c]">
        <div className="flex flex-1 flex-col">
          {swatchRows.map((r, i) => (
            <div key={i} className={`flex ${i === 3 ? "mt-[2px]" : i === 4 ? "mt-[1px]" : ""}`}>
              {r.map((c, k) => <Swatch key={k} c={c} />)}
            </div>
          ))}
        </div>
        <div className="flex w-[12px] flex-col items-center justify-between bg-[#484848] py-[3px] text-[#777]">
          <Tri dir="up" />
          <Tri />
        </div>
      </div>
      <div className="flex h-[21px] items-center pr-[20px] text-[#b8b8b8]">
        <Library size={13} /><Tri size={5} className="ml-[1px] mt-[6px]" />
        <Link2 size={13} className="ml-[11px]" />
        <Cloud size={15} fill="currentColor" className="ml-[9px]" />
        <div className="ml-auto flex items-center gap-[13px]">
          <Sv w={16} h={12}><path d="M0 0h3v3H0zM4 0h3v3H4zM8 0h3v3H8zM0 4h3v3H0zM4 4h3v3H4zM8 4h3v3H8zM0 8h3v3H0zM4 8h3v3H4zM8 8h3v3H8z" /><path d="M12 9h4l-2 2z" /></Sv>
          <Sv w={12} h={12}><rect x="1" y="1" width="10" height="10" fill="none" stroke="currentColor" /><path d="M3 3h6v1H3zM3 5.500h6v1H3zM3 8h6v1H3z" /></Sv>
          <Folder size={14} fill="currentColor" />
          <Sv w={12} h={12}><path d="M2 1h10v10H6v-4H2z" /></Sv>
          <Trash2 size={13} />
        </div>
      </div>
    </div>
  )
}

// iki kareli küçük simge
const Pf = ({ v }: { v: number }) => (
  <Sv w={15} h={14} className="text-[#bdbdbd]">
    {v === 0 && <><rect x="1" y="1" width="8" height="8" /><rect x="5" y="5" width="9" height="8" /></>}
    {v === 1 && <><rect x="1.500" y="1.500" width="8" height="8" fill="none" stroke="currentColor" /><rect x="5.500" y="5.500" width="8" height="7" fill="none" stroke="#6a6a6a" /></>}
    {v === 2 && <><rect x="1.500" y="1.500" width="8" height="8" fill="none" stroke="currentColor" /><rect x="5.500" y="5.500" width="8" height="7" fill="none" stroke="currentColor" /><rect x="5.500" y="5.500" width="4" height="4" /></>}
    {v === 3 && <><rect x="1" y="1" width="8" height="8" /><rect x="5" y="5" width="9" height="8" fill="#777" /></>}
    {v === 4 && <><rect x="1.500" y="1.500" width="7" height="7" fill="none" stroke="currentColor" /><rect x="7.500" y="6.500" width="6" height="6" fill="none" stroke="currentColor" /></>}
    {v === 5 && <><rect x="1.500" y="1.500" width="8" height="8" fill="none" stroke="#777" /><path d="M10 4h4v9H5V10h5z" /></>}
  </Sv>
)

const Al = ({ v }: { v: number }) => (
  <Sv w={16} h={16} className="text-[#bdbdbd]">
    {v === 0 && <><path d="M1 1v14" stroke="currentColor" /><rect x="2" y="3" width="8" height="4" /><rect x="2.500" y="9.500" width="11" height="4" fill="none" stroke="currentColor" /></>}
    {v === 1 && <><path d="M8 1v14" stroke="currentColor" /><rect x="4" y="3" width="8" height="4" /><rect x="2.500" y="9.500" width="11" height="4" fill="none" stroke="currentColor" /></>}
    {v === 2 && <><path d="M15 1v14" stroke="currentColor" /><rect x="6" y="3" width="8" height="4" /><rect x="2.500" y="9.500" width="11" height="4" fill="none" stroke="currentColor" /></>}
    {v === 3 && <><path d="M1 1.500h14" stroke="currentColor" /><rect x="2.500" y="3.500" width="4" height="11" fill="none" stroke="currentColor" /><rect x="9" y="3" width="4" height="7" /></>}
    {v === 4 && <><path d="M1 8h14" stroke="currentColor" /><rect x="2.500" y="2.500" width="4" height="11" fill="#484848" stroke="currentColor" /><rect x="9" y="5" width="5" height="6" /></>}
    {v === 5 && <><path d="M1 15h14" stroke="currentColor" /><rect x="2.500" y="2.500" width="4" height="11" fill="none" stroke="currentColor" /><rect x="9" y="7" width="5" height="7" /></>}
  </Sv>
)

const Dist = ({ v }: { v: number }) => (
  <Sv w={16} h={16} className="text-[#bdbdbd]">
    {v < 3 ? (
      <><path d={v === 0 ? "M1 1.500h15M1 8.500h15" : v === 1 ? "M1 4.500h15M1 11.500h15" : "M1 8.500h15M1 14.500h15"} stroke="currentColor" /><rect x="4" y={v === 0 ? 2 : v === 1 ? 3 : 5} width="8" height="3" /><rect x="3.500" y="10.500" width="9" height="3" fill="none" stroke="currentColor" /></>
    ) : (
      <><path d={v === 3 ? "M1.500 1v14M8.500 1v14" : v === 4 ? "M4.500 1v14M11.500 1v14" : "M7.500 1v14M14.500 1v14"} stroke="currentColor" /><rect x="3.500" y="3.500" width="4" height="9" fill="none" stroke="currentColor" /><rect x="10" y="5" width="4" height="6" /></>
    )}
  </Sv>
)

const Lbl = ({ children, className = "" }: Kids) => <div className={`text-[10.500px] leading-[13px] text-[#d0d0d0] ${className}`}>{children}</div>

function PathfinderBody() {
  return (
    <div className="h-[100px] bg-[#484848] pl-[6px] pt-[6px]">
      <Lbl>Şekil Modları:</Lbl>
      <div className="mt-[4px] flex h-[19px] items-center">
        <div className="ml-[4px] flex w-[125px] justify-between">
          {[0, 1, 2, 2].map((v, i) => <div key={i} className="w-[15px]"><Pf v={v} /></div>)}
        </div>
        <div className="ml-[20px] flex h-[18px] w-[69px] items-center justify-center border border-[#3a3a3a] bg-[#525252] text-[10.500px] text-[#808080]">Genişlet</div>
      </div>
      <Lbl className="mt-[8px]">Yol bulucular:</Lbl>
      <div className="ml-[9px] mt-[7px] flex w-[198px] justify-between">
        {[4, 0, 3, 3, 4, 5].map((v, i) => <Pf key={i} v={v} />)}
      </div>
    </div>
  )
}

function AlignBody() {
  return (
    <div className="h-[161px] bg-[#484848] pl-[6px] pt-[7px]">
      <Lbl>Nesneleri Hizala:</Lbl>
      <div className="mt-[5px] flex h-[20px] w-[213px] items-center pl-[7px]">
        <div className="flex w-[87px] justify-between"><Al v={0} /><Al v={1} /><Al v={2} /></div>
        <div className="ml-[34px] flex w-[88px] justify-between"><Al v={3} /><Al v={4} /><Al v={5} /></div>
      </div>
      <div className="mt-[8px] h-px w-[220px] bg-[#5a5a5a]" />
      <Lbl className="mt-[7px]">Nesneleri Dağıt:</Lbl>
      <div className="mt-[5px] flex h-[20px] w-[213px] items-center pl-[7px]">
        <div className="flex w-[87px] justify-between"><Dist v={0} /><Dist v={1} /><Dist v={2} /></div>
        <div className="ml-[34px] flex w-[88px] justify-between"><Dist v={3} /><Dist v={4} /><Dist v={5} /></div>
      </div>
      <div className="mt-[8px] h-px w-[220px] bg-[#5a5a5a]" />
      <div className="flex">
        <div className="w-[147px] pt-[7px]">
          <Lbl>Aralığı Dağıt:</Lbl>
          <div className="mt-[5px] flex items-center pl-[6px]">
            <Al v={0} />
            <div className="ml-[15px]"><Al v={3} /></div>
            <div className="ml-[3px] flex h-[18px] w-[75px] border border-[#3a3a3a] bg-[#6a6a6a] text-[10.500px] leading-[16px] text-[#8f8f8f]">
              <div className="flex w-[17px] flex-col items-center justify-around bg-[#5c5c5c] text-[#7f7f7f]"><Tri dir="up" size={6} /><Tri size={6} /></div>
              <span className="pl-[3px]">0 mm</span>
            </div>
          </div>
        </div>
        <div className="ml-[0px] mt-[6px] h-[41px] w-px bg-[#5a5a5a]" />
        <div className="pl-[8px] pt-[7px]">
          <Lbl>Buraya Hizala:</Lbl>
          <div className="ml-[7px] mt-[6px] flex items-center text-[#bdbdbd]">
            <Sv w={14} h={14}><rect x="1" y="1" width="12" height="12" fill="none" stroke="currentColor" strokeDasharray="2 1" /><rect x="5" y="5" width="4" height="4" fill="none" stroke="currentColor" /></Sv>
            <Tri className="ml-[2px]" />
          </div>
        </div>
      </div>
    </div>
  )
}

function ArtboardsBody() {
  return (
    <div className="h-[184px] bg-[#484848] px-[6px] pt-[6px]">
      <div className="h-[158px] border border-[#2c2c2c]">
        <div className="flex h-[19px] items-center border-b border-[#333] bg-[#5a6478] text-[10.500px] text-[#d8d8d8]">
          <div className="flex h-full w-[31px] items-center justify-end border-r border-[#3a3a3a] pr-[4px]">1</div>
          <span className="pl-[5px]">Çalışma Yüzeyi 1 kopya</span>
          <div className="ml-auto flex h-full w-[40px] items-center justify-center border-l border-[#3a3a3a]">
            <svg width="14" height="12" viewBox="0 0 14 12" className="fill-none stroke-[#cfcfcf]"><rect x="2" y="2" width="10" height="8" /><path d="M2 0v1M12 0v1M0 2h1M13 2h1M0 10h1M13 10h1M2 11v1M12 11v1" /></svg>
          </div>
        </div>
      </div>
      <div className="flex h-[19px] items-center pr-[21px] text-[10.500px] text-[#d0d0d0]">
        <span>1 Çalışma Yüzeyi</span>
        <div className="ml-auto flex items-center gap-[14px] text-[#8a8a8a]">
          <Sv w={12} h={12}><path d="M6 1l5 6H8v4H4V7H1z" /></Sv>
          <Sv w={12} h={12}><path d="M6 11l5-6H8V1H4v4H1z" /></Sv>
          <Sv w={12} h={12} className="text-[#c8c8c8]"><path d="M2 1h10v10H6v-4H2z" /></Sv>
          <Trash2 size={12} className="text-[#6c6c6c]" />
        </div>
      </div>
    </div>
  )
}

function DockPanels() {
  return (
    <div className="absolute left-[1541px] top-[108px] z-20 flex h-[912px] w-[317px] flex-col rounded-t-[2px] border-x border-[#2a2a2a] bg-[#2e2e2e]">
      <TitleBar />
      <TabRow tabs={[{ label: "Katmanlar", w: 64, on: true }]} />
      <LayersBody />
      <div className="h-[3px]" />
      <TabRow tabs={[{ label: "Renk Örnekleri", w: 86, on: true }]} />
      <SwatchesBody />
      <div className="h-[3px]" />
      <TabRow tabs={[{ label: "Yol Bulucu", w: 65, on: true }]} />
      <PathfinderBody />
      <div className="h-[3px]" />
      <TabRow tabs={[{ label: "Hizala", w: 51, on: true, pl: 14 }]} />
      <AlignBody />
      <div className="h-[3px]" />
      <TabRow tabs={[{ label: "Çalışma Yüzeyleri", w: 96, on: true }]} />
      <ArtboardsBody />
      <Gripper />
    </div>
  )
}

function RightDock() {
  return (
    <div className="flex w-[38px] shrink-0 flex-col items-center border-l border-[#262626] bg-[#484848] text-[#bdbdbd]">
      <div className="flex h-[13px] w-full items-center justify-end bg-[#363636] pr-[4px]"><Collapse /></div>
      <div className="mt-[5px] h-[4px] w-[11px] bg-[repeating-linear-gradient(90deg,#111_0,#111_1px,#777_1px,#777_2px)]" />
      <svg width="24" height="22" viewBox="0 0 24 22" className="mt-[5px] fill-none stroke-[#bdbdbd] stroke-[2]">
        <circle cx="12" cy="11" r="9" />
        <path d="M5 16c4-5 8-8 14-8M12 4c-4 3-5 9 2 12" />
      </svg>
      <svg width="20" height="20" viewBox="0 0 20 20" className="mt-[8px]">
        <circle cx="10" cy="10" r="9" fill="none" stroke="#bdbdbd" strokeDasharray="2 1.500" />
        <circle cx="10" cy="10" r="6" fill="#bdbdbd" />
      </svg>
      <svg width="20" height="20" viewBox="0 0 20 20" className="mt-[8px] fill-none stroke-[#bdbdbd]">
        <path d="M6 2.500h12v13H10" />
        <rect x="1.500" y="10.500" width="6" height="6" />
        <rect x="4.500" y="13.500" width="6" height="5" />
      </svg>
      <div className="mt-[6px] h-px w-full bg-[#2a2a2a]" />
    </div>
  )
}

const EndBar = ({ className = "" }: { className?: string }) => <div className={`h-[8px] w-[2px] bg-[#777] ${className}`} />

function BottomBar() {
  return (
    <div className="flex h-[16px] shrink-0 items-center border-t border-[#2a2a2a] bg-[#454545] text-[11px] text-[#ddd]">
      <svg width="13" height="12" viewBox="0 0 13 12" className="ml-[12px] fill-none stroke-[#ccc]">
        <path d="M9 7v4H1V2h5" />
        <path d="M4 8c0-4 3-5 5-5V1l4 3-4 3V5C7 5 5 6 4 8z" fill="#ccc" />
      </svg>
      <div className="ml-[10px] h-full w-[52px] bg-[#a5a5a5] pl-[2px] leading-[16px] text-[#111]">100%</div>
      <Drop className="h-full w-[15px]" />
      <EndBar className="ml-[8px]" />
      <Tri dir="left" className="text-[#777]" />
      <Tri dir="left" className="ml-[9px] text-[#777]" />
      <div className="ml-[9px] h-full w-[42px] bg-[#a5a5a5] pl-[3px] leading-[16px] text-[#111]">1</div>
      <Drop className="h-full w-[15px] text-[#888]" />
      <Tri dir="right" className="ml-[11px] text-[#777]" />
      <Tri dir="right" className="ml-[8px] text-[#777]" />
      <EndBar />
      <div className="ml-[10px] h-full w-px bg-[#333]" />
      <div className="w-[198px] text-center text-[10.500px]">Seçim</div>
      <div className="h-full w-px bg-[#333]" />
      <Tri dir="right" className="ml-[5px]" />
      <div className="ml-[4px] flex h-full flex-1 items-center bg-[#333]">
        <Tri dir="left" className="ml-[4px]" />
        <div className="ml-[580px] h-full w-[15px] bg-[#777]" />
        <Tri dir="right" className="ml-auto mr-[6px]" />
      </div>
      <div className="h-full w-[18px] bg-[#484848]" />
    </div>
  )
}

export default function App() {
  return (
    <div className="relative flex h-[1040px] w-[1919px] flex-col overflow-hidden bg-[#484848] font-['Liberation_Sans',Arial,sans-serif]">
      <MenuBar />
      <ControlBar />
      <div className="flex min-h-0 flex-1">
        <ToolPanel />
        <div className="flex min-w-0 flex-1 flex-col">
          <div className="flex h-[19px] shrink-0 bg-[#333]">
            <div className="flex w-[245px] items-center bg-[#4a4a4a] pl-[10px] pr-[8px] text-[11.200px] text-[#d4d4d4]">
              <span>widget.ai @ %100 (RGB/GPU Önizleme)</span>
              <span className="ml-auto text-[#ccc]">×</span>
            </div>
          </div>
          <div className="flex min-h-0 flex-1">
            <div className="flex min-w-0 flex-1 flex-col">
              <HRuler />
              <div className="flex min-h-0 flex-1">
                <VRuler />
                <div className="min-w-0 flex-1 bg-[#5c5c5c] pl-[252px] pt-[120px]">
                  <Artboard />
                </div>
              </div>
            </div>
            <div className="flex w-[18px] shrink-0 flex-col items-center border-l border-[#2a2a2a] bg-[#333] text-[#ddd]">
              <Tri dir="up" size={9} className="mt-[4px]" />
              <div className="mt-[444px] h-[15px] w-full bg-[#8a8a8a]" />
              <Tri size={9} className="mb-[7px] mt-auto" />
            </div>
          </div>
          <BottomBar />
        </div>
        <RightDock />
      </div>
      <TracePanel />
      <DockPanels />
      <ColorPanel />
    </div>
  )
}
